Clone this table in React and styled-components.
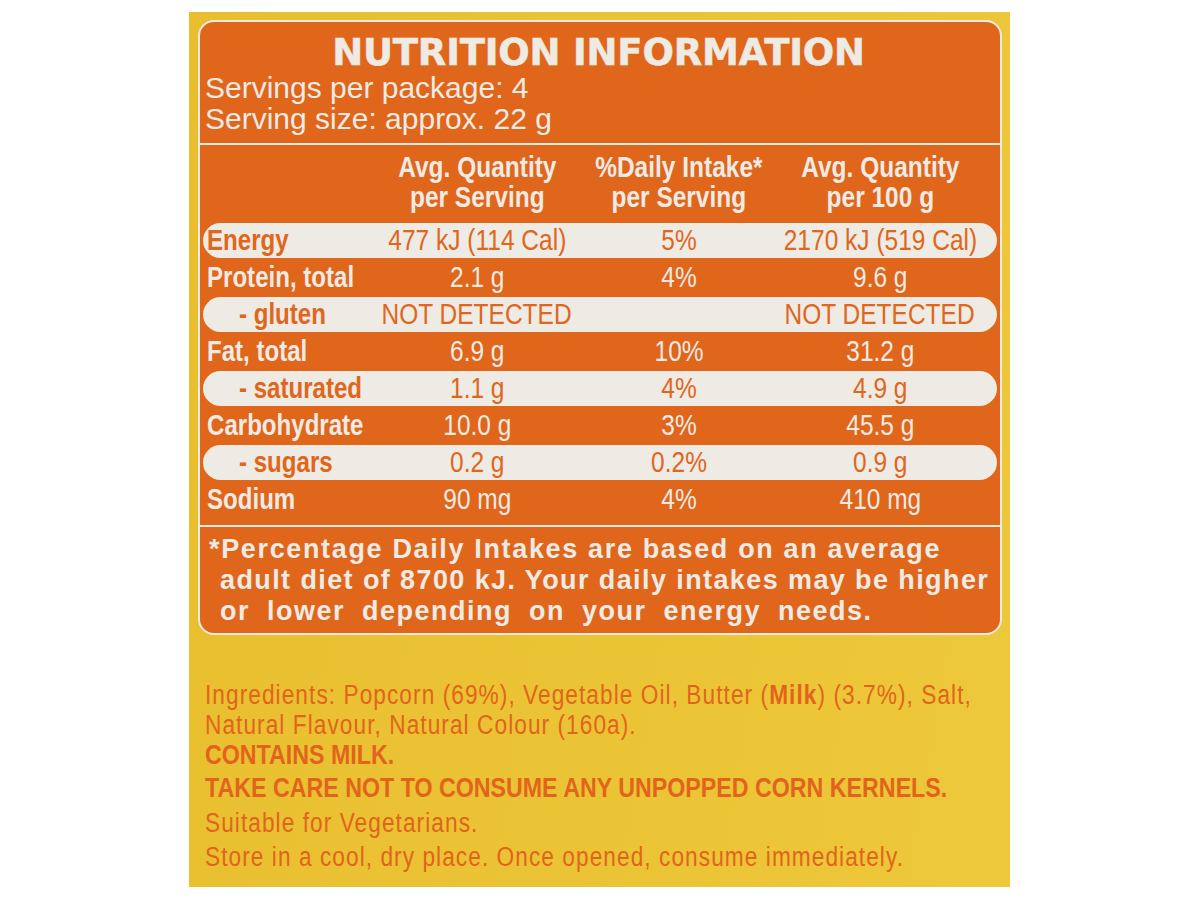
import React from "react";
import styled, { createGlobalStyle } from "styled-components";

const ORANGE = "#E0661C";
const CREAM = "#EEEAE4";
const INK = "#E2641C";
const SANS = `"Liberation Sans", Arial, sans-serif`;

const Global = createGlobalStyle`
  html, body { margin: 0; padding: 0; background: #ffffff; }
  body { font-family: ${SANS}; }
  * { box-sizing: border-box; }
`;

const Page = styled.div`
  width: 1200px;
  height: 900px;
  padding: 12px 190px 13px 189px;
  background: #ffffff;
  overflow: hidden;
`;

const Panel = styled.div`
  height: 875px;
  background: linear-gradient(100deg, #E8BE2E 0%, #EBC435 55%, #EDC83A 100%);
  padding: 8px 8px 0 9px;
`;

const Card = styled.section`
  width: 804px;
  background: ${ORANGE};
  border: 2px solid ${CREAM};
  border-radius: 16px;
  color: ${CREAM};
  overflow: hidden;
`;

/* condensed face: Arial drawn narrower */
const Narrow = styled.span`
  display: inline-block;
  transform: scaleX(${(p) => p.$scale || 0.82});
  transform-origin: ${(p) => p.$origin || "center"};
  text-align: center;
  white-space: nowrap;
`;

const Top = styled.div`
  padding: 11px 0 9px 5px;
  border-bottom: 2px solid ${CREAM};
`;

const Title = styled.h1`
  margin: 0;
  font-family: "DejaVu Sans", sans-serif;
  font-weight: 700;
  font-size: 37px;
  line-height: 39px;
  text-align: center;
  letter-spacing: -0.2px;
  padding-right: 8px;
  -webkit-text-stroke: 0.5px ${CREAM};
`;

const Servings = styled.p`
  margin: 0;
  font-family: ${SANS};
  font-size: 30px;
  line-height: 31px;
`;

const Table = styled.div`
  padding-bottom: 7px;
`;

const Grid = styled.div`
  display: grid;
  grid-template-columns: 180px 188px 216px 186px 1fr;
  align-items: center;
  margin: 0 3px;
  font-family: ${SANS};
`;

const HeadRow = styled(Grid)`
  padding: 7px 0 10px;
  font-weight: 700;
  font-size: 29.5px;
  line-height: 30px;
`;

const Cell = styled.div`
  display: flex;
  justify-content: center;
  grid-column: ${(p) => p.$col || "auto"};
`;

const Row = styled(Grid)`
  height: ${(p) => (p.$pill ? "35px" : "37px")};
  margin-top: ${(p) => (p.$pill ? "1px" : "0")};
  margin-bottom: ${(p) => (p.$pill ? "1px" : "0")};
  background: ${(p) => (p.$pill ? CREAM : "transparent")};
  color: ${(p) => (p.$pill ? ORANGE : CREAM)};
  border-radius: 18px;
  font-size: 29px;
  line-height: 35px;
`;

const Label = styled.div`
  font-weight: 700;
  padding-left: ${(p) => (p.$sub ? "36px" : "4px")};
`;

const Foot = styled.div`
  border-top: 2px solid ${CREAM};
  padding: 7px 0 6px 20px;
  font-family: ${SANS};
  font-weight: 700;
  font-size: 27px;
  line-height: 31px;
`;

const FootLine = styled.div`
  white-space: nowrap;
  margin-left: ${(p) => (p.$hang ? "-11px" : "0")};
  letter-spacing: ${(p) => p.$ls};
  word-spacing: ${(p) => p.$ws || "0"};
`;

const Info = styled.div`
  margin-top: 45px;
  margin-left: 7px;
  color: ${INK};
  font-family: ${SANS};
  font-size: 27px;
`;

const Line = styled.p`
  margin: 0;
  width: max-content;
  line-height: ${(p) => p.$lh || "34px"};
  font-weight: ${(p) => (p.$bold ? 700 : 400)};
  letter-spacing: ${(p) => (p.$bold ? "0" : "1.25px")};
  white-space: nowrap;
  transform: scaleX(${(p) => (p.$bold ? 0.86 : 0.84)});
  transform-origin: left center;
`;

const rows = [
  { label: "Energy", a: "477 kJ (114 Cal)", b: "5%", c: "2170 kJ (519 Cal)", pill: true },
  { label: "Protein, total", a: "2.1 g", b: "4%", c: "9.6 g" },
  { label: "- gluten", sub: true, a: "NOT DETECTED", b: "", c: "NOT DETECTED", pill: true },
  { label: "Fat, total", a: "6.9 g", b: "10%", c: "31.2 g" },
  { label: "- saturated", sub: true, a: "1.1 g", b: "4%", c: "4.9 g", pill: true },
  { label: "Carbohydrate", a: "10.0 g", b: "3%", c: "45.5 g" },
  { label: "- sugars", sub: true, a: "0.2 g", b: "0.2%", c: "0.9 g", pill: true },
  { label: "Sodium", a: "90 mg", b: "4%", c: "410 mg" },
];

const heads = [
  ["Avg. Quantity", "per Serving"],
  ["%Daily Intake*", "per Serving"],
  ["Avg. Quantity", "per 100 g"],
];

export default function App() {
  return (
    <Page>
      <Global />
      <Panel>
        <Card>
          <Top>
            <Title>NUTRITION INFORMATION</Title>
            <Servings>
              Servings per package: 4
              <br />
              Serving size: approx. 22 g
            </Servings>
          </Top>
          <Table>
            <HeadRow>
              {heads.map(([l1, l2], i) => (
                <Cell key={i} $col={i + 2}>
                  <Narrow $scale={0.83}>
                    {l1}
                    <br />
                    {l2}
                  </Narrow>
                </Cell>
              ))}
            </HeadRow>
            {rows.map((r) => (
              <Row key={r.label} $pill={r.pill}>
                <Label $sub={r.sub}>
                  <Narrow $origin="left" $scale={0.83}>
                    {r.label}
                  </Narrow>
                </Label>
                <Cell>
                  <Narrow $scale={0.845}>{r.a}</Narrow>
                </Cell>
                <Cell>
                  <Narrow $scale={0.845}>{r.b}</Narrow>
                </Cell>
                <Cell>
                  <Narrow $scale={0.845}>{r.c}</Narrow>
                </Cell>
              </Row>
            ))}
          </Table>
          <Foot>
            <FootLine $hang $ls="1.65px">
              *Percentage Daily Intakes are based on an average
            </FootLine>
            <FootLine $ls="1.4px">adult diet of 8700 kJ. Your daily intakes may be higher</FootLine>
            <FootLine $ls="1.5px" $ws="8px">
              or lower depending on your energy needs.
            </FootLine>
          </Foot>
        </Card>
        <Info>
          <Line $lh="30px">
            Ingredients: Popcorn (69%), Vegetable Oil, Butter (<b>Milk</b>) (3.7%), Salt,
          </Line>
          <Line $lh="30px">Natural Flavour, Natural Colour (160a).</Line>
          <Line $bold $lh="31px">
            CONTAINS MILK.
          </Line>
          <Line $bold $lh="35px">
            TAKE CARE NOT TO CONSUME ANY UNPOPPED CORN KERNELS.
          </Line>
          <Line>Suitable for Vegetarians.</Line>
          <Line $lh="35px">Store in a cool, dry place. Once opened, consume immediately.</Line>
        </Info>
      </Panel>
    </Page>
  );
}
